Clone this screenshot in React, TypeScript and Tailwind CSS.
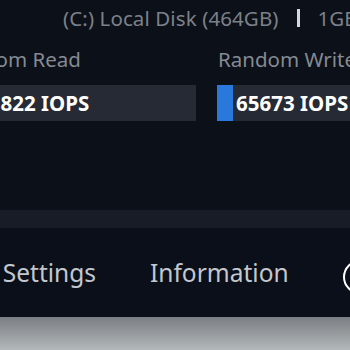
import React from "react";

export default function App() {
  const font = { fontFamily: '"Noto Sans", "Open Sans", sans-serif' };
  return (
    <div className="w-[350px] h-[350px] overflow-hidden bg-[#0c1018] flex flex-col" style={font}>
      <div className="h-[317px] flex flex-col shrink-0">
        <div className="flex items-center h-[36px] pl-[63px] gap-[18px] whitespace-nowrap">
          <span className="text-[20.5px] tracking-[0.1px] text-[#7c8189]">(C:) Local Disk (464GB)</span>
          <span className="w-[3px] h-[18px] bg-[#d4d7dc] shrink-0"></span>
          <span className="text-[20.5px] text-[#7c8189]">1GB</span>
        </div>
        <div className="flex gap-[21px] -ml-[54px] mt-[10px] whitespace-nowrap">
          <div className="w-[250px] shrink-0 flex flex-col">
            <span className="text-[20.5px] text-[#858a93] h-[26px] leading-[26px]">Random Read</span>
            <div className="mt-[13px] h-[36px] bg-[#262a35] flex items-center pl-[31px]">
              <span className="text-[20.5px] font-bold text-white">45822 IOPS</span>
            </div>
          </div>
          <div className="w-[242px] shrink-0 flex flex-col">
            <span className="text-[20.5px] text-[#858a93] h-[26px] leading-[26px] pl-[1px]">Random Write</span>
            <div className="mt-[13px] h-[36px] bg-[#262a35] flex items-center relative">
              <div className="w-[16px] h-full bg-[#2a78dc] shrink-0"></div>
              <span className="text-[20.5px] font-bold text-white ml-[3px]">65673 IOPS</span>
            </div>
          </div>
        </div>
        <div className="flex-1"></div>
        <div className="h-[18px] bg-[#171c26] shrink-0"></div>
        <div className="h-[89px] bg-[#0b0f19] flex items-center whitespace-nowrap shrink-0">
          <span className="w-[96px] shrink-0 flex justify-end text-[24.5px] text-[#c3c7ce] mt-[2px]">Settings</span>
          <span className="ml-[54px] shrink-0 text-[24.5px] text-[#c3c7ce] mt-[2px]">Information</span>
          <span className="w-[34px] h-[34px] rounded-full border-[2px] border-white shrink-0 ml-[54px] mt-[8px]"></span>
        </div>
      </div>
      <div className="flex-1 bg-gradient-to-b from-[#7b7f83] to-[#b3b8bb]"></div>
    </div>
  );
}
